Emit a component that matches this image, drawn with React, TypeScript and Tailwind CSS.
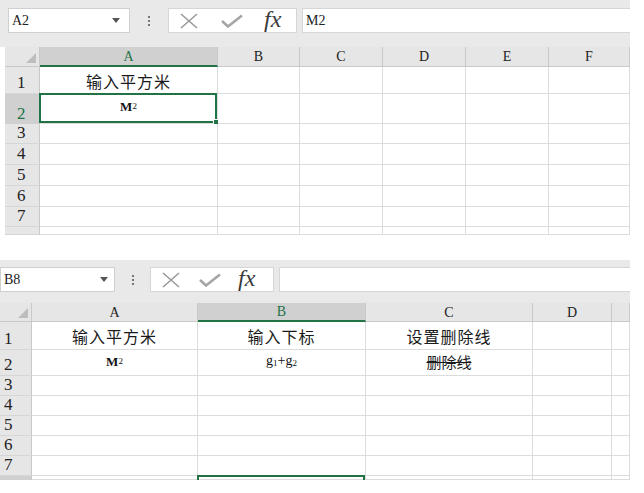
import React from "react";

type Col = { label: string; w: string; selected?: boolean };
type Row = {
  label: string;
  h: string;
  selected?: boolean;
  cells: React.ReactNode[];
};

// SimSun-like latin glyphs in the screenshot are thin serifs
const LATIN = "[font-family:'Liberation_Serif',serif]";
const CJK = "[font-family:'Noto_Sans_CJK_SC',sans-serif]";

function FnIcons({ gaps }: { gaps: string }) {
  return (
    <div className={`flex items-center h-full ${gaps}`}>
      <svg width="22" height="16" viewBox="0 0 22 16" className="shrink-0">
        <path d="M3 1 L19 15 M19 1 L3 15" stroke="#9a9a9a" strokeWidth="1.6" fill="none" />
      </svg>
      <svg width="24" height="14" viewBox="0 0 24 14" className="shrink-0">
        <path d="M2 7 L8 12.5 L22 1.5" stroke="#a5a5a5" strokeWidth="2.6" fill="none" />
      </svg>
      <span className={`${LATIN} italic text-[24px] leading-none text-[#3a3a3a] -mt-1 shrink-0`}>
        fx
      </span>
    </div>
  );
}

function Toolbar({
  nameBox,
  formula,
  pad,
  nameW,
  arrowPad,
  dotsW,
  fnW,
  fnGaps,
  h,
  pt,
}: {
  nameBox: string;
  formula: string;
  pad: string;
  nameW: string;
  arrowPad: string;
  dotsW: string;
  fnW: string;
  fnGaps: string;
  h: string;
  pt: string;
}) {
  return (
    <div className={`bg-[#e9e9e9] ${h} ${pt} ${pad} pr-0 flex items-start`}>
      <div className={`${nameW} h-[25px] bg-white border border-[#d0d0d0] flex items-center justify-between pl-[3px] ${arrowPad}`}>
        <span className={`${LATIN} text-[14px] text-[#222]`}>{nameBox}</span>
        <svg width="8" height="5" viewBox="0 0 8 5">
          <path d="M0 0 L8 0 L4 5 Z" fill="#555" />
        </svg>
      </div>
      <div className={`${dotsW} h-[25px] flex flex-col items-center justify-center gap-[2px]`}>
        <span className="w-[2px] h-[2px] bg-[#777]" />
        <span className="w-[2px] h-[2px] bg-[#777]" />
        <span className="w-[2px] h-[2px] bg-[#777]" />
      </div>
      <div className={`${fnW} h-[25px] bg-white border border-[#d6d6d6]`}>
        <FnIcons gaps={fnGaps} />
      </div>
      <div className="flex-1 h-[25px] ml-[5px] bg-white border-t border-l border-b border-[#d6d6d6] flex items-center pl-[3px]">
        <span className={`${LATIN} text-[14px] text-[#222]`}>{formula}</span>
      </div>
    </div>
  );
}

function Grid({
  rowHeadW,
  headH,
  labelPad,
  cols,
  rows,
}: {
  rowHeadW: string;
  headH: string;
  labelPad: string;
  cols: Col[];
  rows: Row[];
}) {
  return (
    <div className="flex flex-col">
      <div className={`flex ${headH}`}>
        <div className={`${rowHeadW} bg-[#e6e6e6] border-r border-b border-[#c9c9c9] flex items-end justify-end pr-[3px] pb-[3px]`}>
          <svg width="10" height="10" viewBox="0 0 10 10">
            <path d="M10 0 L10 10 L0 10 Z" fill="#bdbdbd" />
          </svg>
        </div>
        {cols.map((c) => (
          <div
            key={c.w + c.label}
            className={`${c.w} flex items-center justify-center ${LATIN} text-[14px] ${
              c.selected
                ? "bg-[#d0d0d0] text-[#217346] border-b-2 border-b-[#217346] border-r border-r-[#c9c9c9]"
                : "bg-[#e6e6e6] text-[#222] border-b border-r border-[#c9c9c9]"
            }`}
          >
            {c.label}
          </div>
        ))}
      </div>
      {rows.map((r, ri) => (
        <div key={ri} className={`flex ${r.h}`}>
          <div
            className={`${rowHeadW} border-r border-[#c9c9c9] flex items-end ${labelPad} pb-[2px] ${LATIN} text-[17px] leading-none overflow-hidden ${
              r.selected ? "bg-[#d0d0d0] text-[#217346]" : "bg-[#e6e6e6] text-[#222] border-b border-b-[#d6d6d6]"
            }`}
          >
            {r.label}
          </div>
          {cols.map((c, i) => (
            <div
              key={c.w + c.label}
              className={`${c.w} relative border-r border-b border-[#dcdcdc] bg-white flex items-end justify-center`}
            >
              {r.cells[i]}
            </div>
          ))}
        </div>
      ))}
    </div>
  );
}

function Selection() {
  return (
    <div className="absolute -left-[1px] -top-[1px] right-0 bottom-0 border-2 border-[#217346] pointer-events-none">
      <div className="absolute -right-[5px] -bottom-[5px] w-[7px] h-[7px] bg-[#217346] border border-white" />
    </div>
  );
}

function Sq({ pb }: { pb: string }) {
  return (
    <span className={`${LATIN} font-bold text-[13px] text-[#111] ${pb} leading-none`}>
      M<sup className="text-[9px] font-normal relative -top-[2px]">2</sup>
    </span>
  );
}

export default function App() {
  const topCols: Col[] = [
    { label: "A", w: "w-[178px]", selected: true },
    { label: "B", w: "w-[82px]" },
    { label: "C", w: "w-[83px]" },
    { label: "D", w: "w-[83px]" },
    { label: "E", w: "w-[83px]" },
    { label: "F", w: "w-[81px]" },
  ];
  const cjkText = `${CJK} text-[16px] leading-none text-[#1a1a1a] tracking-[1px]`;
  const topRows: Row[] = [
    {
      label: "1",
      h: "h-[27px]",
      cells: [<span className={`${cjkText} pb-[4px]`}>输入平方米</span>],
    },
    {
      label: "2",
      h: "h-[30px]",
      selected: true,
      cells: [
        <>
          <Sq pb="pb-[10px]" />
          <Selection />
        </>,
      ],
    },
    { label: "3", h: "h-[20px]", cells: [] },
    { label: "4", h: "h-[21px]", cells: [] },
    { label: "5", h: "h-[21px]", cells: [] },
    { label: "6", h: "h-[21px]", cells: [] },
    { label: "7", h: "h-[20px]", cells: [] },
    { label: "", h: "h-[8px]", cells: [] },
  ];

  const botCols: Col[] = [
    { label: "A", w: "w-[166px]" },
    { label: "B", w: "w-[168px]", selected: true },
    { label: "C", w: "w-[167px]" },
    { label: "D", w: "w-[79px]" },
    { label: "", w: "w-[18px]" },
  ];
  const botRows: Row[] = [
    {
      label: "1",
      h: "h-[28px]",
      cells: [
        <span className={`${cjkText} pb-[5px]`}>输入平方米</span>,
        <span className={`${cjkText} pb-[5px]`}>输入下标</span>,
        <span className={`${cjkText} pb-[5px]`}>设置删除线</span>,
      ],
    },
    {
      label: "2",
      h: "h-[26px]",
      cells: [
        <Sq pb="pb-[7px]" />,
        <span className={`${LATIN} text-[14px] text-[#111] pb-[7px] leading-none`}>
          g<sub className="text-[9px] relative top-[1px]">1</sub>+g
          <sub className="text-[9px] relative top-[1px]">2</sub>
        </span>,
        <span className={`${CJK} text-[15px] leading-none text-[#1a1a1a] line-through pb-[6px]`}>删除线</span>,
      ],
    },
    { label: "3", h: "h-[20px]", cells: [] },
    { label: "4", h: "h-[20px]", cells: [] },
    { label: "5", h: "h-[20px]", cells: [] },
    { label: "6", h: "h-[20px]", cells: [] },
    { label: "7", h: "h-[20px]", cells: [] },
    {
      label: "",
      h: "h-[4px]",
      selected: true,
      cells: [
        null,
        <div className="absolute -left-[1px] right-0 -top-[1px] h-[5px] border-t-2 border-l-2 border-r-2 border-[#217346]" />,
      ],
    },
  ];

  return (
    <div className="w-[644px] h-[493px] bg-white overflow-hidden">
      <div className="w-[630px]">
        <Toolbar
          nameBox="A2"
          formula="M2"
          pad="pl-[8px]"
          nameW="w-[122px]"
          arrowPad="pr-[9px]"
          dotsW="w-[38px]"
          fnW="w-[129px]"
          fnGaps="pl-[9px] gap-[20px]"
          h="h-[47px]"
          pt="pt-[8px]"
        />
        <div className="pl-[5px] bg-white">
          <Grid rowHeadW="w-[35px]" headH="h-[20px]" labelPad="pl-[12px]" cols={topCols} rows={topRows} />
        </div>
      </div>
      <div className="h-[25px]" />
      <div className="w-[630px]">
        <Toolbar
          nameBox="B8"
          formula=""
          pad="pl-0"
          nameW="w-[115px]"
          arrowPad="pr-[6px]"
          dotsW="w-[35px]"
          fnW="w-[124px]"
          fnGaps="pl-[9px] gap-[16px]"
          h="h-[43px]"
          pt="pt-[7px]"
        />
        <Grid rowHeadW="w-[32px]" headH="h-[19px]" labelPad="pl-[4px]" cols={botCols} rows={botRows} />
      </div>
    </div>
  );
}
